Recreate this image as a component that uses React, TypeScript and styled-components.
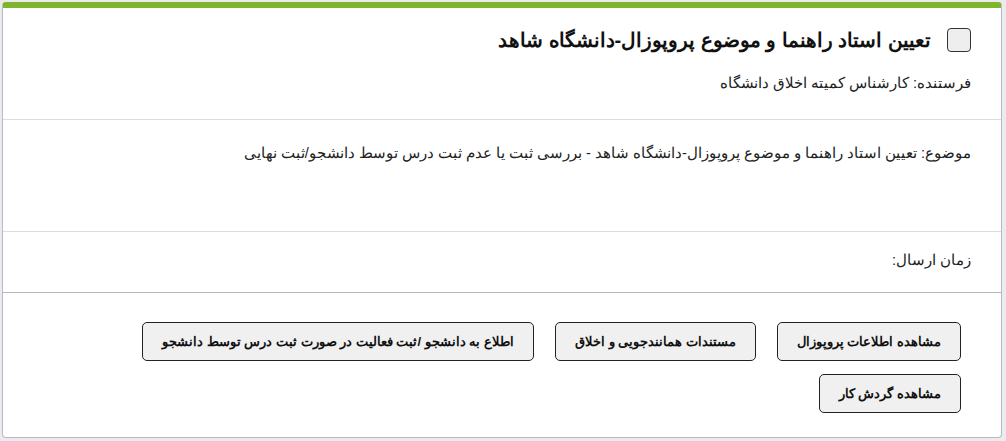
import styled, { createGlobalStyle } from 'styled-components';

const GlobalStyle = createGlobalStyle`
  html, body {
    margin: 0;
    padding: 0;
    background: #ebebef;
  }
  body {
    font-family: "Liberation Sans", sans-serif;
    color: #222;
  }
`;

const Page = styled.div`
  padding: 2px 4px 3px 2px;
`;

const Panel = styled.div`
  direction: rtl;
  background: #fff;
  border: 1px solid #b9b9c2;
  border-top: 6px solid #7db52d;
  border-radius: 4px;
  overflow: hidden;
`;

const Header = styled.div`
  padding: 20px 30px 26px;
  border-bottom: 1px solid #dcdcdc;
`;

const TitleRow = styled.div`
  display: flex;
  align-items: center;
  gap: 16px;
`;

const Check = styled.span`
  width: 22px;
  height: 22px;
  border: 1px solid #333;
  border-radius: 4px;
  background: #eeeeee;
  flex: none;
`;

const Title = styled.h1`
  margin: 0;
  font-size: 20px;
  font-weight: bold;
  color: #111;
`;

const Line = styled.p`
  margin: 0;
  font-size: 14.5px;
  line-height: 20px;
`;

const Sender = styled(Line)`
  margin-top: 21px;
`;

const Section = styled.div<{ $h: number; $top: number; $dark?: boolean }>`
  height: ${(p) => p.$h}px;
  box-sizing: border-box;
  padding: ${(p) => p.$top}px 30px 0;
  border-bottom: 1px solid ${(p) => (p.$dark ? '#b9b9c2' : '#dcdcdc')};
`;

const Actions = styled.div`
  display: flex;
  flex-wrap: wrap;
  gap: 13px 21px;
  padding: 29px 40px 24px;
`;

const Button = styled.button`
  height: 39px;
  padding: 0 19px;
  border: 1px solid #222;
  border-radius: 5px;
  background: #f0f0f0;
  font-family: inherit;
  font-size: 13px;
  font-weight: bold;
  color: #111;
  direction: rtl;
  cursor: pointer;
`;

const actions = [
  'مشاهده اطلاعات پروپوزال',
  'مستندات همانندجویی و اخلاق',
  'اطلاع به دانشجو /ثبت فعالیت در صورت ثبت درس توسط دانشجو',
  'مشاهده گردش کار',
];

export default function App() {
  return (
    <Page>
      <GlobalStyle />
      <Panel>
        <Header>
          <TitleRow>
            <Check />
            <Title>تعیین استاد راهنما و موضوع پروپوزال-دانشگاه شاهد</Title>
          </TitleRow>
          <Sender>فرستنده: کارشناس کمیته اخلاق دانشگاه</Sender>
        </Header>
        <Section $h={112} $top={23}>
          <Line>
            موضوع: تعیین استاد راهنما و موضوع پروپوزال-دانشگاه شاهد - بررسی ثبت یا عدم ثبت درس توسط دانشجو/ثبت نهایی
          </Line>
        </Section>
        <Section $h={61} $top={18} $dark>
          <Line>زمان ارسال:</Line>
        </Section>
        <Actions>
          {actions.map((a) => (
            <Button key={a}>{a}</Button>
          ))}
        </Actions>
      </Panel>
    </Page>
  );
}
